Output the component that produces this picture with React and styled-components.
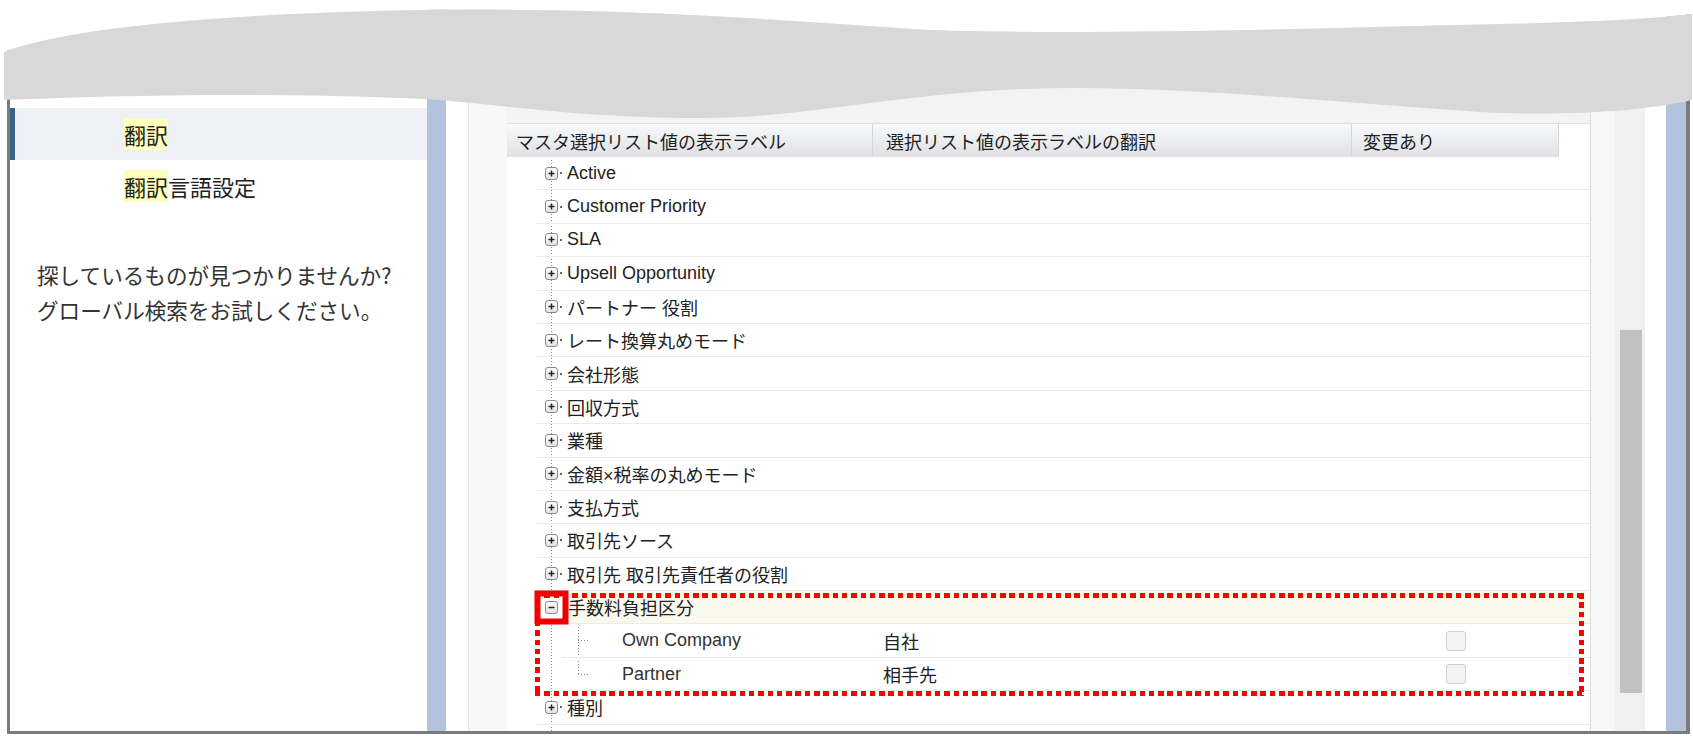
import React from 'react'
import styled, { createGlobalStyle } from 'styled-components'

const GlobalStyle = createGlobalStyle`
  html, body {
    margin: 0;
    padding: 0;
    background: #fff;
  }
  body {
    font-family: "Liberation Sans", "Noto Sans CJK JP", sans-serif;
    color: #222;
  }
`

const Page = styled.div`
  position: relative;
  width: 1693px;
  height: 743px;
  padding: 0 3px 9px 7px;
  box-sizing: border-box;
  overflow: hidden;
`

const Frame = styled.div`
  display: flex;
  height: 734px;
  box-sizing: border-box;
  border-left: 3px solid #7b7b7b;
  border-right: 4px solid #7b7b7b;
  border-bottom: 3px solid #7b7b7b;
  background: #fff;
`

const Sidebar = styled.aside`
  width: 417px;
  flex-shrink: 0;
  padding-top: 56px;
  box-sizing: border-box;
  font-family: "Noto Sans CJK JP", sans-serif;
`

const NavItem = styled.div`
  height: 52px;
  display: flex;
  align-items: center;
  padding-left: 114px;
  font-size: 22px;
  color: #222;
  background: ${p => (p.$active ? '#edf1f6' : 'transparent')};
  box-shadow: ${p => (p.$active ? 'inset 5px 0 0 #3b6189' : 'none')};
`

const Hit = styled.mark`
  background: #ffffbe;
  color: inherit;
  padding: 0;
`

const HelpText = styled.p`
  margin: 45px 0 0;
  padding-left: 27px;
  font-size: 21.6px;
  line-height: 35px;
  color: #333;
  white-space: nowrap;
`

const Strip = styled.div`
  width: ${p => p.$w}px;
  flex-shrink: 0;
  background: #b3c3de;
`

const Main = styled.main`
  flex: 1;
  display: flex;
  padding-left: 22px;
  padding-right: 21px;
  background: #fff;
`

const Panel = styled.section`
  display: flex;
  width: 1147px;
  box-sizing: border-box;
  padding: 0 24px 0 38px;
  background: #f8f8f8;
  border-left: 1px solid #e3e3e3;
`

const Table = styled.div`
  width: 1084px;
  display: flex;
  flex-direction: column;
  background: #fff;
  border-right: 1px solid #dcdcdc;
`

const Toolbar = styled.div`
  height: 124px;
  flex-shrink: 0;
  box-sizing: border-box;
  background: #f3f3f3;
  border-bottom: 1px solid #e0e0e0;
`

const Header = styled.div`
  width: 1052px;
  height: 33px;
  flex-shrink: 0;
  display: grid;
  grid-template-columns: 366px 479px 1fr;
  background: linear-gradient(#f8f9fa, #dfe1e5);
  font-family: "Noto Sans CJK JP", sans-serif;
  font-size: 18px;
  color: #1e1e1e;
`

const HeadCell = styled.div`
  display: flex;
  align-items: center;
  padding-left: ${p => p.$pad}px;
  border-right: 1px solid #d3d6da;
  white-space: nowrap;
`

const Body = styled.div`
  flex: 1;
  background:
    repeating-linear-gradient(180deg, #8a8a8a 0 1px, transparent 1px 3px) 44px 3px / 1px 100% no-repeat,
    #fff;
`

const Row = styled.div`
  height: 33.4px;
  box-sizing: border-box;
  margin-left: ${p => p.$inset}px;
  display: grid;
  grid-template-columns: ${p => 366 - p.$inset}px 479px 1fr;
  align-items: center;
  border-bottom: 1px solid #ebebeb;
  background: ${p => (p.$open ? '#faf9ee' : 'transparent')};
  font-size: 18px;
  color: #222;
`

const Node = styled.div`
  display: flex;
  align-items: center;
  height: 100%;
  padding-left: ${p => p.$pad}px;
  white-space: nowrap;
`

const Knob = styled.span`
  display: flex;
  width: 13px;
  height: 13px;
  flex-shrink: 0;
  background: #fff;
  box-shadow: ${p => (p.$marked ? '0 0 0 4.5px #fff, 0 0 0 10.5px #ee0000' : 'none')};
`

const Tick = styled.span`
  width: 9px;
  height: 12px;
  flex-shrink: 0;
  background: radial-gradient(circle, #666 0 0.9px, transparent 1.1px) 2px 50% / 2px 2px no-repeat;
`

const Branch = styled.span`
  align-self: stretch;
  width: 12px;
  flex-shrink: 0;
  background:
    repeating-linear-gradient(180deg, #8a8a8a 0 1px, transparent 1px 3px) 0 3px / 1px ${p => (p.$last ? 'calc(50% - 2px)' : '100%')} no-repeat,
    repeating-linear-gradient(90deg, #8a8a8a 0 1px, transparent 1px 3px) 0 50% / 12px 1px no-repeat;
`

const Label = styled.span`
  margin-left: ${p => p.$gap || 0}px;
  color: ${p => (p.$soft ? '#333' : '#222')};
`

const Cell = styled.div`
  padding-left: ${p => p.$pad}px;
  display: flex;
  align-items: center;
  font-family: "Noto Sans CJK JP", sans-serif;
`

const Check = styled.input.attrs({ type: 'checkbox' })`
  appearance: none;
  margin: 0;
  width: 20px;
  height: 20px;
  box-sizing: border-box;
  border: 1px solid #cfcfcf;
  border-radius: 3px;
  background: #f4f4f4;
`

const Group = styled.div`
  position: relative;
`

const Marquee = styled.div`
  position: absolute;
  top: 2px;
  left: 28px;
  right: 6px;
  bottom: -5px;
  pointer-events: none;
  background:
    repeating-linear-gradient(90deg, #f00 0 5.5px, transparent 5.5px 9.3px) top left / 100% 5px no-repeat,
    repeating-linear-gradient(90deg, #f00 0 5.5px, transparent 5.5px 9.3px) bottom left / 100% 5px no-repeat,
    repeating-linear-gradient(180deg, #f00 0 5.5px, transparent 5.5px 9.3px) top left / 5px 100% no-repeat,
    repeating-linear-gradient(180deg, #f00 0 5.5px, transparent 5.5px 9.3px) top right / 5px 100% no-repeat;
`

const Scrollbar = styled.div`
  width: 30px;
  flex-shrink: 0;
  box-sizing: border-box;
  padding: 330px 3px 0 5px;
  background: #f0f0f0;
`

const Thumb = styled.div`
  height: 363px;
  background: #c1c1c1;
`

// torn-off top edge drawn over the window
const Tear = styled.svg`
  position: absolute;
  top: 0;
  left: 0;
  pointer-events: none;
`

function Expander({ open, marked }) {
  const id = open ? 'kg-open' : 'kg-closed'
  return (
    <Knob $marked={marked}>
      <svg width="13" height="13" viewBox="0 0 13 13">
        <defs>
          <linearGradient id={id} x1="0" y1="0" x2="0" y2="1">
            <stop offset="0" stopColor="#ffffff" />
            <stop offset="1" stopColor="#e2e2e2" />
          </linearGradient>
        </defs>
        <rect x="0.5" y="0.5" width="12" height="12" rx="2.5" fill={`url(#${id})`} stroke="#8a8a8a" />
        <path d="M3.5 6.5h6" stroke="#262626" strokeWidth="1.5" />
        {!open && <path d="M6.5 3.5v6" stroke="#262626" strokeWidth="1.5" />}
      </svg>
    </Knob>
  )
}

const before = [
  'Active',
  'Customer Priority',
  'SLA',
  'Upsell Opportunity',
  'パートナー 役割',
  'レート換算丸めモード',
  '会社形態',
  '回収方式',
  '業種',
  '金額×税率の丸めモード',
  '支払方式',
  '取引先ソース',
  '取引先 取引先責任者の役割',
]

const children = [
  { name: 'Own Company', tr: '自社' },
  { name: 'Partner', tr: '相手先' },
]

function TreeRow({ label }) {
  return (
    <Row $inset={30}>
      <Node $pad={8}>
        <Expander />
        <Tick />
        <Label>{label}</Label>
      </Node>
      <div />
      <div />
    </Row>
  )
}

export default function App() {
  return (
    <>
      <GlobalStyle />
      <Page>
        <Frame>
          <Sidebar>
            <NavItem>エクスポート</NavItem>
            <NavItem $active>
              <Hit>翻訳</Hit>
            </NavItem>
            <NavItem>
              <Hit>翻訳</Hit>言語設定
            </NavItem>
            <HelpText>
              探しているものが見つかりませんか?
              <br />
              グローバル検索をお試しください。
            </HelpText>
          </Sidebar>
          <Strip $w={19} />
          <Main>
            <Panel>
              <Table>
                <Toolbar />
                <Header>
                  <HeadCell $pad={9}>マスタ選択リスト値の表示ラベル</HeadCell>
                  <HeadCell $pad={13}>選択リスト値の表示ラベルの翻訳</HeadCell>
                  <HeadCell $pad={11}>変更あり</HeadCell>
                </Header>
                <Body>
                  {before.map(l => (
                    <TreeRow key={l} label={l} />
                  ))}
                  <Group>
                    <Row $inset={30} $open>
                      <Node $pad={8}>
                        <Expander open marked />
                        <Label $gap={10}>手数料負担区分</Label>
                      </Node>
                      <div />
                      <div />
                    </Row>
                    {children.map((c, i) => (
                      <Row key={c.name} $inset={55}>
                        <Node $pad={16}>
                          <Branch $last={i === children.length - 1} />
                          <Label $gap={32} $soft>{c.name}</Label>
                        </Node>
                        <Cell $pad={10}>{c.tr}</Cell>
                        <Cell $pad={94}>
                          <Check readOnly />
                        </Cell>
                      </Row>
                    ))}
                    <Marquee />
                  </Group>
                  <TreeRow label="種別" />
                </Body>
              </Table>
            </Panel>
            <Scrollbar>
              <Thumb />
            </Scrollbar>
          </Main>
          <Strip $w={20} />
        </Frame>
        <Tear width="1693" height="130" viewBox="0 0 1693 130">
          <path
            d="M0 0 H1693 V14 H1692 C1660 18 1600 22 1500 24 C1400 26 1100 36 930 30 C800 22 640 7 420 10 C200 14 60 30 4 52 H0 Z"
            fill="#ffffff"
          />
          <path
            d="M4 52 C60 30 200 14 420 10 C640 7 800 22 930 30 C1100 36 1400 26 1500 24 C1600 22 1660 18 1692 14 L1692 100 C1640 112 1560 116 1480 112 C1300 100 1150 82 1000 90 C880 97 800 118 700 118 C560 118 480 100 400 98 C250 92 100 96 4 100 Z"
            fill="#d8d8d8"
          />
        </Tear>
      </Page>
    </>
  )
}
